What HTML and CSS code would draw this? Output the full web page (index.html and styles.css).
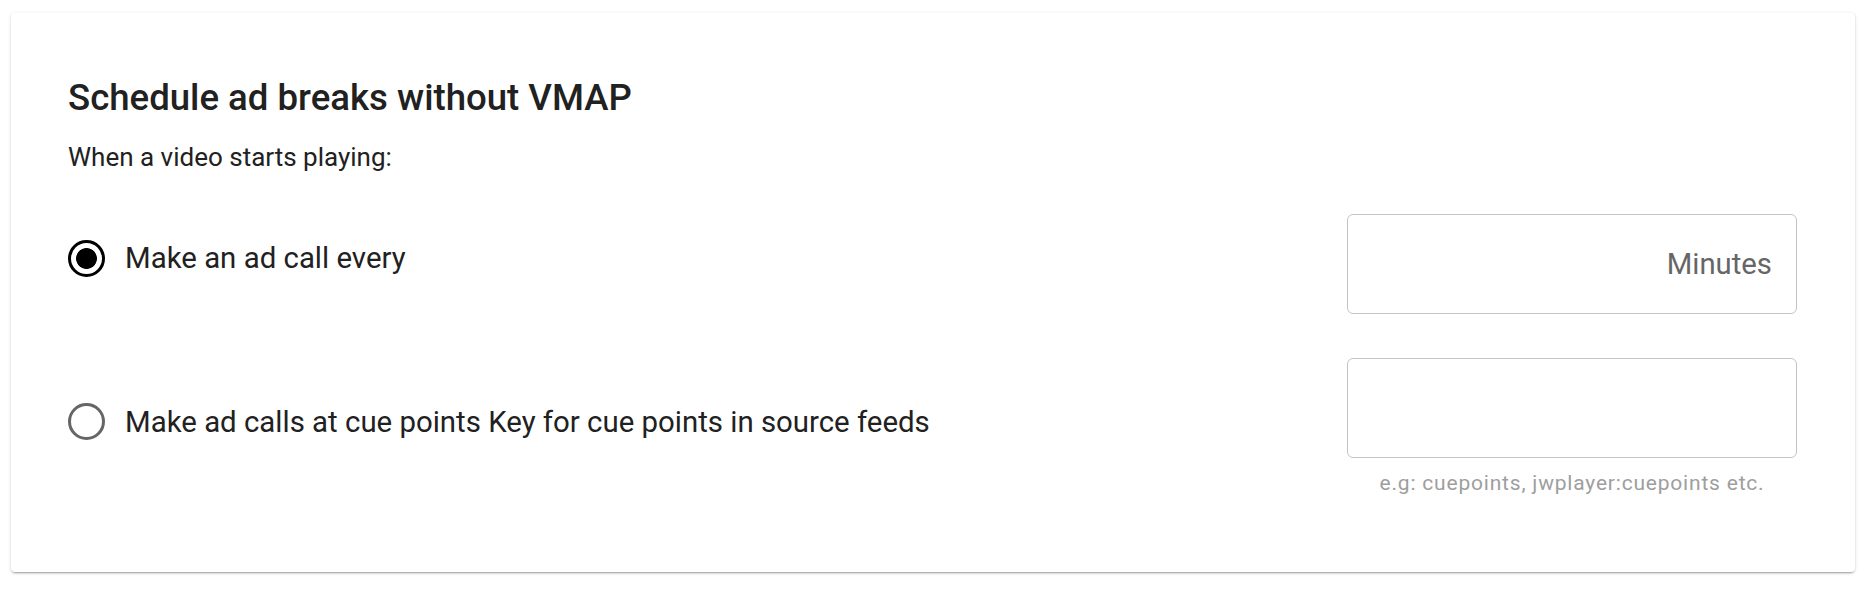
FILE: index.html
```html
<!doctype html>
<html>
  <head>
    <link rel="stylesheet" href="styles.css">
  </head>
  <body>
    <section class="card">
      <h2 class="card-title">Schedule ad breaks without VMAP</h2>
      <p class="card-subtitle">When a video starts playing:</p>

      <div class="option-row">
        <label class="option">
          <input class="radio" type="radio" name="schedule" value="interval" checked>
          <span class="option-label">Make an ad call every</span>
        </label>
        <div class="field">
          <input class="text-input" type="text" placeholder="Minutes">
        </div>
      </div>

      <div class="option-row">
        <label class="option">
          <input class="radio" type="radio" name="schedule" value="cuepoints">
          <span class="option-label">Make ad calls at cue points Key for cue points in source feeds</span>
        </label>
        <div class="field">
          <input class="text-input" type="text">
          <div class="helper-text">e.g: cuepoints, jwplayer:cuepoints etc.</div>
        </div>
      </div>
    </section>
  </body>
</html>
```

FILE: styles.css
```css
html, body {
  margin: 0;
  padding: 0;
  background: #fff;
}

body {
  padding: 13px 19px 18px 11px;
  font-family: Roboto, "Noto Sans", Arial, sans-serif;
  color: #212121;
}

.card {
  background: #fff;
  border-radius: 4px;
  box-shadow: 0 3px 2px -2px rgba(0, 0, 0, .22),
              0 1px 2px 0 rgba(0, 0, 0, .14),
              0 1px 4px 0 rgba(0, 0, 0, .1);
  padding: 63px 58px 75px 57px;
}

.card-title {
  margin: 0;
  font-size: 36.6px;
  line-height: 43px;
  font-weight: 500;
}

.card-subtitle {
  margin: 20px 0 39px;
  font-size: 26px;
  line-height: 36px;
}

.option-row {
  display: flex;
  align-items: center;
  justify-content: space-between;
}

.option-row + .option-row {
  margin-top: 44px;
}

.option {
  display: flex;
  align-items: center;
  gap: 20px;
  margin-bottom: 12px;
  cursor: pointer;
}

.radio {
  appearance: none;
  -webkit-appearance: none;
  margin: 0;
  width: 37px;
  height: 37px;
  flex: none;
  border: 3.5px solid #666;
  border-radius: 50%;
  box-sizing: border-box;
}

.radio:checked {
  border-color: #000;
  background: radial-gradient(circle, #000 0 10px, transparent 10.8px);
}

.option-label {
  font-size: 29.4px;
  line-height: 36px;
}

.field {
  width: 450px;
  flex: none;
}

.text-input {
  display: block;
  width: 100%;
  height: 100px;
  box-sizing: border-box;
  margin: 0;
  padding: 0 24px;
  border: 1px solid #c4c4c4;
  border-radius: 6px;
  background: #fff;
  font: 29.3px Roboto, "Noto Sans", Arial, sans-serif;
  color: #212121;
  text-align: right;
  outline: none;
}

.text-input::placeholder {
  color: #666;
  opacity: 1;
}

.helper-text {
  margin-top: 11px;
  font-size: 21px;
  line-height: 28px;
  letter-spacing: .8px;
  color: #9e9e9e;
  text-align: center;
}
```
